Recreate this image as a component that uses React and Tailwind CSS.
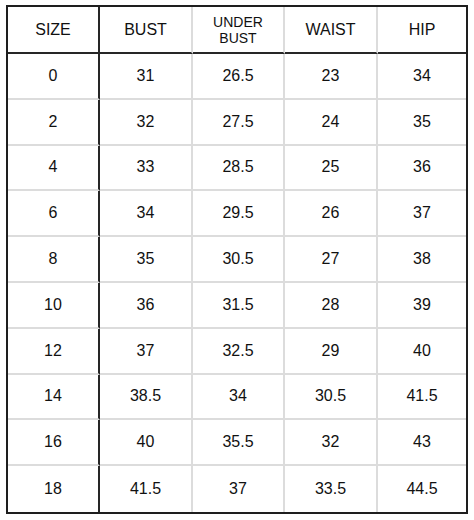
import React from "react";

const rows = [
  ["0", "31", "26.5", "23", "34"],
  ["2", "32", "27.5", "24", "35"],
  ["4", "33", "28.5", "25", "36"],
  ["6", "34", "29.5", "26", "37"],
  ["8", "35", "30.5", "27", "38"],
  ["10", "36", "31.5", "28", "39"],
  ["12", "37", "32.5", "29", "40"],
  ["14", "38.5", "34", "30.5", "41.5"],
  ["16", "40", "35.5", "32", "43"],
  ["18", "41.5", "37", "33.5", "44.5"],
];

function Cell({ col, last, children, header }) {
  const right =
    col === 4 ? "" : col === 0 ? "border-r-2 border-r-[#262626]" : "border-r-2 border-r-[#dcdcdc]";
  const bottom = header
    ? "border-b-2 border-b-[#262626]"
    : last
    ? ""
    : "border-b-2 border-b-[#dcdcdc]";
  return (
    <div
      className={`flex items-center justify-center text-center text-[16px] ${right} ${bottom}`}
    >
      {children}
    </div>
  );
}

export default function App() {
  return (
    <div className="w-[474px] h-[520px] bg-white pt-[5px] pl-[6px]" style={{ fontFamily: '"Liberation Sans", Arial, sans-serif' }}>
      <div className="w-[462px] h-[509px] border-2 border-[#1e1e1e] grid grid-cols-[92px_93px_92px_93px_1fr] grid-rows-[47px_repeat(10,1fr)] text-[#111111]">
        <Cell col={0} header>SIZE</Cell>
        <Cell col={1} header>BUST</Cell>
        <Cell col={2} header>
          <span className="text-[14px] leading-[16px] block pt-[1px]">
            UNDER
            <br />
            BUST
          </span>
        </Cell>
        <Cell col={3} header>WAIST</Cell>
        <Cell col={4} header>HIP</Cell>
        {rows.map((r, i) =>
          r.map((v, j) => (
            <Cell key={`${i}-${j}`} col={j} last={i === rows.length - 1}>
              {v}
            </Cell>
          ))
        )}
      </div>
    </div>
  );
}
